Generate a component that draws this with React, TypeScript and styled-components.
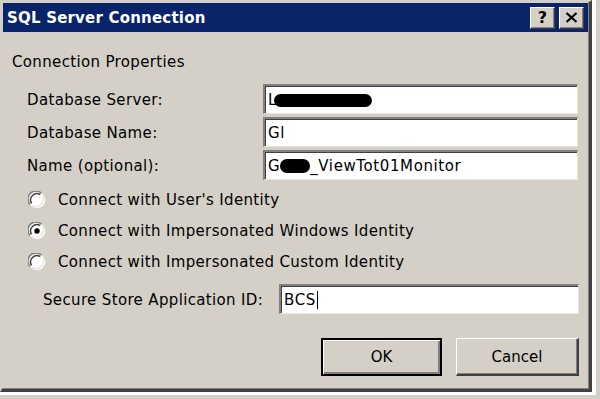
import React from 'react';
import styled, { createGlobalStyle } from 'styled-components';

const GlobalStyle = createGlobalStyle`
  html, body {
    margin: 0;
    padding: 0;
    background: #d4d0c8;
    width: 600px;
    height: 399px;
    overflow: hidden;
  }
  body {
    font-family: "DejaVu Sans", Tahoma, sans-serif;
  }
`;

const Shadow = styled.div`
  width: 596px;
  height: 395px;
  background: #ffffff;
  box-sizing: border-box;
`;

const Window = styled.div`
  width: 592px;
  height: 392px;
  box-sizing: border-box;
  background: #d4d0c8;
  border-top: 2px solid #d4d0c8;
  border-left: 2px solid #d4d0c8;
  border-right: 3px solid #404040;
  border-bottom: 3px solid #404040;
  box-shadow: inset -1px -1px 0 #808080;
  display: flex;
  flex-direction: column;
`;

const TitleBar = styled.div`
  height: 29px;
  margin: 1px 1px 0 1px;
  background: #0a246a;
  display: flex;
  align-items: center;
  justify-content: space-between;
  padding: 0 4px 0 4px;
`;

const Title = styled.span`
  color: #ffffff;
  font-weight: bold;
  font-size: 15px;
  letter-spacing: 0.2px;
`;

const TitleButtons = styled.div`
  display: flex;
  gap: 4px;
`;

const CaptionButton = styled.div`
  width: 25px;
  height: 22px;
  box-sizing: border-box;
  background: #d4d0c8;
  border-top: 1px solid #ffffff;
  border-left: 1px solid #ffffff;
  border-right: 1px solid #404040;
  border-bottom: 1px solid #404040;
  box-shadow: inset -1px -1px 0 #808080;
  display: flex;
  align-items: center;
  justify-content: center;
  font-weight: bold;
  font-size: 16px;
  color: #000;
`;

const Body = styled.div`
  flex: 1;
  padding: 20px 10px 0 10px;
  display: flex;
  flex-direction: column;
  color: #000;
  font-size: 15px;
  letter-spacing: 0.35px;
`;

const Heading = styled.div`
  height: 20px;
  line-height: 20px;
`;

const FieldGrid = styled.div`
  display: grid;
  grid-template-columns: 236px 315px;
  row-gap: 3px;
  margin: 12px 0 0 15px;
  align-items: center;
`;

const Label = styled.div`
  padding-top: 2px;
`;

const TextBox = styled.div`
  height: 30px;
  box-sizing: border-box;
  background: #fff;
  border-top: 2px solid #808080;
  border-left: 2px solid #808080;
  border-right: 1px solid #e8e6e0;
  border-bottom: 1px solid #e8e6e0;
  box-shadow: inset 1px 1px 0 #404040;
  display: flex;
  align-items: center;
  padding-left: 3px;
  letter-spacing: 0.6px;
  white-space: nowrap;
  overflow: hidden;
`;

const Redacted = styled.span<{ w: number; h?: number }>`
  display: inline-block;
  width: ${(p) => p.w}px;
  height: ${(p) => p.h ?? 14}px;
  background: #000;
  border-radius: 7px;
  margin-top: 1px;
`;

const Caret = styled.span`
  display: inline-block;
  width: 1px;
  height: 18px;
  background: #000;
  margin-left: 1px;
`;

const RadioList = styled.div`
  display: flex;
  flex-direction: column;
  gap: 12px;
  margin: 10px 0 0 16px;
`;

const RadioRow = styled.div`
  display: flex;
  align-items: center;
  gap: 12px;
  height: 19px;
`;

const SecureRow = styled.div`
  display: grid;
  grid-template-columns: 236px 300px;
  align-items: center;
  margin: 13px 0 0 31px;
`;

const ButtonRow = styled.div`
  display: flex;
  justify-content: flex-end;
  gap: 14px;
  margin: 24px 0 0 0;
`;

const DialogButton = styled.div<{ $default?: boolean }>`
  width: ${(p) => (p.$default ? 121 : 123)}px;
  height: 38px;
  box-sizing: border-box;
  background: #d4d0c8;
  display: flex;
  align-items: center;
  justify-content: center;
  letter-spacing: 0;
  border-top: 1px solid #ffffff;
  border-left: 1px solid #ffffff;
  border-right: 2px solid #404040;
  border-bottom: 2px solid #404040;
  box-shadow: inset -1px -1px 0 #808080;
  ${(p) =>
    p.$default &&
    `
    border: 2px solid #000;
    box-shadow: inset 1px 1px 0 #fff, inset -2px -2px 0 #808080;
  `}
`;

const Radio: React.FC<{ checked?: boolean }> = ({ checked }) => (
  <svg width="18" height="18" viewBox="0 0 12 12">
    <circle cx="6" cy="6" r="5.5" fill="#fff" />
    <path d="M1.5 9 A5.2 5.2 0 0 1 9 1.5" stroke="#808080" strokeWidth="1" fill="none" />
    <path d="M2.4 8.2 A4.2 4.2 0 0 1 8.2 2.4" stroke="#404040" strokeWidth="1" fill="none" />
    <path d="M9.8 2.8 A5.2 5.2 0 0 1 2.8 9.8" stroke="#e8e6e0" strokeWidth="1" fill="none" />
    {checked && <circle cx="6" cy="6" r="1.8" fill="#000" />}
  </svg>
);

const App: React.FC = () => {
  return (
    <>
      <GlobalStyle />
      <Shadow>
        <Window>
          <TitleBar>
            <Title>SQL Server Connection</Title>
            <TitleButtons>
              <CaptionButton>?</CaptionButton>
              <CaptionButton>
                <svg width="13" height="11" viewBox="0 0 13 11">
                  <path d="M1.5 1 L11.5 10 M11.5 1 L1.5 10" stroke="#000" strokeWidth="2.2" />
                </svg>
              </CaptionButton>
            </TitleButtons>
          </TitleBar>
          <Body>
            <Heading>Connection Properties</Heading>
            <FieldGrid>
              <Label>Database Server:</Label>
              <TextBox>
                L<Redacted w={98} h={13} style={{ marginLeft: -3 }} />
              </TextBox>
              <Label>Database Name:</Label>
              <TextBox>Gl</TextBox>
              <Label>Name (optional):</Label>
              <TextBox>
                G<Redacted w={30} h={14} />_ViewTot01Monitor
              </TextBox>
            </FieldGrid>
            <RadioList>
              <RadioRow>
                <Radio />
                Connect with User's Identity
              </RadioRow>
              <RadioRow>
                <Radio checked />
                Connect with Impersonated Windows Identity
              </RadioRow>
              <RadioRow>
                <Radio />
                Connect with Impersonated Custom Identity
              </RadioRow>
            </RadioList>
            <SecureRow>
              <Label>Secure Store Application ID:</Label>
              <TextBox>
                BCS<Caret />
              </TextBox>
            </SecureRow>
            <ButtonRow>
              <DialogButton $default>OK</DialogButton>
              <DialogButton>Cancel</DialogButton>
            </ButtonRow>
          </Body>
        </Window>
      </Shadow>
    </>
  );
};

export default App;
